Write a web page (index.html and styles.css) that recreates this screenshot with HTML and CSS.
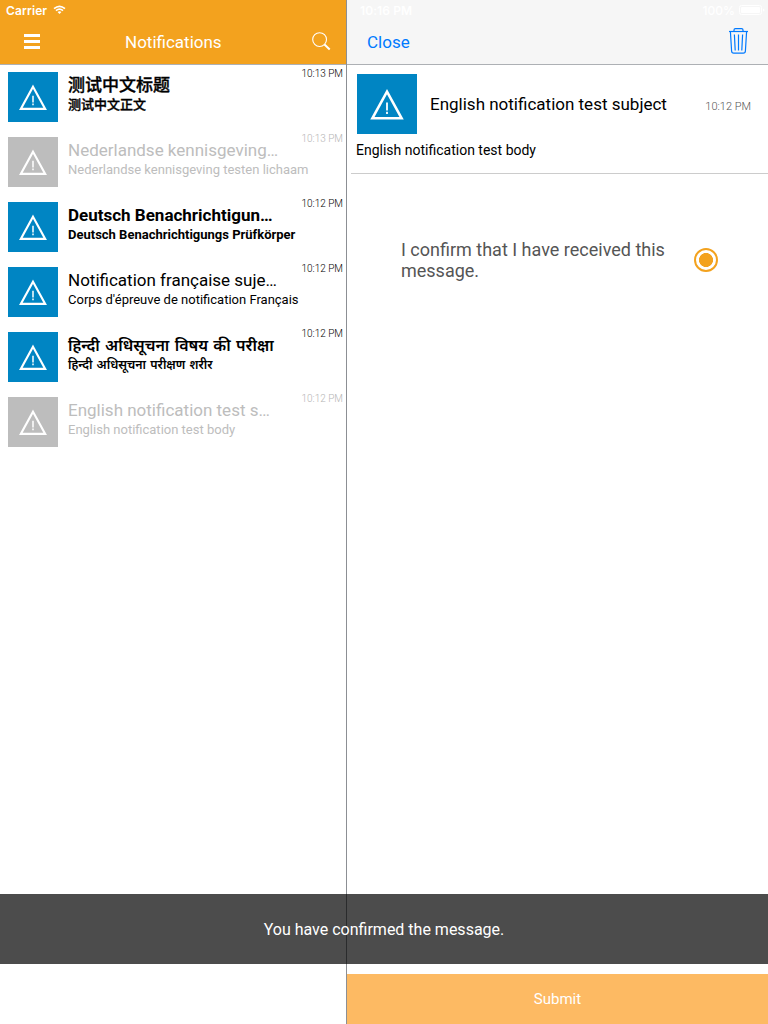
FILE: index.html
```html
<!DOCTYPE html>
<html lang="en">
<head>
<meta charset="utf-8">
<title>Notifications</title>
<link rel="stylesheet" href="styles.css">
</head>
<body>
<svg class="defs" width="0" height="0">
  <symbol id="warning" viewBox="0 0 50 50">
    <path d="M25 14.700 37.200 36.900H12.800Z" fill="none" stroke="#fff" stroke-width="2.100"/>
    <path d="M25 23.800v6.700M25 31.500v1.800" stroke="#fff" stroke-width="1.500"/>
  </symbol>
</svg>
<div class="app">
  <aside class="sidebar">
    <header class="bar bar-main">
      <div class="status">
        <span class="carrier">Carrier</span>
        <svg class="wifi" width="13" height="10" viewBox="0 0 14 10"><g fill="none" stroke="#fff" stroke-width="1.8"><path d="M1.1 3.500Q7-1.500 12.900 3.500"/><path d="M3.200 5.800Q7 2.500 10.800 5.800"/></g><path d="M4.900 7.200Q7 5.500 9.100 7.200L7 9.400Z" fill="#fff"/></svg>
      </div>
      <div class="nav">
        <svg class="menu" width="16" height="15" viewBox="0 0 16 15"><path d="M0 1.5h16M0 7.5h16M0 13.5h16" stroke="#fff" stroke-width="3"/></svg>
        <h1 class="heading">Notifications</h1>
        <svg class="search" width="19" height="19" viewBox="0 0 19 19" fill="none" stroke="#fff"><circle cx="7.600" cy="7.600" r="6.900" stroke-width="1.100"/><path d="m12.500 12.500 5.200 5" stroke-width="2"/></svg>
      </div>
    </header>
    <ul class="list">
      <li class="item unread"><svg class="tile"><use href="#warning"/></svg><div class="copy"><div class="title zh">测试中文标题</div><div class="sub zh">测试中文正文</div></div><time class="time">10:13 PM</time></li>
      <li class="item inactive"><svg class="tile"><use href="#warning"/></svg><div class="copy"><div class="title">Nederlandse kennisgeving…</div><div class="sub">Nederlandse kennisgeving testen lichaam</div></div><time class="time">10:13 PM</time></li>
      <li class="item unread"><svg class="tile"><use href="#warning"/></svg><div class="copy"><div class="title">Deutsch Benachrichtigun…</div><div class="sub">Deutsch Benachrichtigungs Prüfkörper</div></div><time class="time">10:12 PM</time></li>
      <li class="item"><svg class="tile"><use href="#warning"/></svg><div class="copy"><div class="title">Notification française suje…</div><div class="sub">Corps d'épreuve de notification Français</div></div><time class="time">10:12 PM</time></li>
      <li class="item unread"><svg class="tile"><use href="#warning"/></svg><div class="copy"><div class="title hi">हिन्दी अधिसूचना विषय की परीक्षा</div><div class="sub hi">हिन्दी अधिसूचना परीक्षण शरीर</div></div><time class="time">10:12 PM</time></li>
      <li class="item inactive"><svg class="tile"><use href="#warning"/></svg><div class="copy"><div class="title">English notification test s…</div><div class="sub">English notification test body</div></div><time class="time">10:12 PM</time></li>
    </ul>
  </aside>
  <main class="detail">
    <header class="bar bar-detail">
      <div class="status">
        <span class="clock">10:16 PM</span>
        <span class="percent">100%</span>
        <svg class="battery" width="26" height="10" viewBox="0 0 26 10"><rect x=".5" y=".5" width="22" height="9" rx="2" fill="none" stroke="#fff"/><rect x="2" y="2" width="19" height="6" rx="1" fill="#fff"/><path d="M24 3.5v3q1.5-.5 1.5-1.5T24 3.5" fill="#fff"/></svg>
      </div>
      <div class="nav">
        <a class="close">Close</a>
        <svg class="trash" width="19" height="26" viewBox="0 0 19 26" fill="none" stroke="#007aff" stroke-width="1.2"><path d="M0 3.500h19"/><path d="M5 3.500V2Q5 .6 6.400 .6h6.200Q14 .6 14 2v1.500"/><path d="M1.400 3.500 2.600 23Q2.700 25.200 4.700 25.200H14.300Q16.300 25.200 16.400 23L17.600 3.500"/><path d="M5.400 6.500 6.200 22.500M9.500 6.500v16M13.600 6.500 12.800 22.500"/></svg>
      </div>
    </header>
    <section class="message">
      <div class="summary">
        <svg class="tile large"><use href="#warning"/></svg>
        <h2 class="subject">English notification test subject</h2>
        <time class="sent">10:12 PM</time>
      </div>
      <p class="body">English notification test body</p>
    </section>
    <label class="confirm">
      <span class="confirm-text">I confirm that I have received this message.</span>
      <span class="radio"></span>
    </label>
    <button class="submit">Submit</button>
  </main>
  <div class="toast">You have confirmed the message.</div>
</div>
</body>
</html>
```
FILE: styles.css
```css
* { box-sizing: border-box; }
body { margin: 0; background: #fff; color: #000; font-family: Roboto, "Noto Sans", "Noto Sans CJK SC", sans-serif; font-feature-settings: "liga" 1; }
h1, h2, p, ul { margin: 0; padding: 0; font-weight: 400; }
svg { display: block; flex: none; }
.defs { position: absolute; }
.app { position: relative; display: flex; width: 768px; height: 1024px; overflow: hidden; }
.sidebar { width: 347px; border-right: 1px solid #8c8f94; }
.detail { width: 421px; display: flex; flex-direction: column; }
.bar { height: 65px; border-bottom: 1px solid #adb0b4; }
.bar-main { width: 346px; background: #f3a21e; color: #fff; }
.bar-detail { background: #f6f6f6; }
.status { height: 20px; display: flex; align-items: center; color: #fff; font: 600 12px/20px Inter, sans-serif; }
.bar-main .status { padding-left: 6px; gap: 6px; }
.carrier { padding-top: 2px; letter-spacing: .1px; }
.clock { padding: 2px 0 0 13px; letter-spacing: .1px; }
.percent { margin-left: auto; margin-right: 4px; padding-top: 2px; font-weight: 500; }
.battery { margin-right: 3px; }
.nav { height: 44px; display: flex; align-items: center; }
.menu { margin-left: 24px; margin-top: -2px; }
.heading { margin-left: 85px; font-size: 17px; line-height: 20px; }
.search { margin-left: auto; margin-right: 15px; margin-top: -2px; }
.close { margin-left: 20px; color: #007aff; font-size: 17px; }
.trash { margin-left: auto; margin-right: 20px; margin-top: -3px; }
.list { list-style: none; }
.item { height: 65px; display: flex; padding: 7px 3px 0 8px; position: relative; }
.tile { width: 50px; height: 50px; background: #0085c3; }
.large { width: 60px; height: 60px; }
.copy { margin-left: 10px; padding-top: 3px; white-space: nowrap; }
.title { height: 20px; font-size: 17px; line-height: 20px; }
.sub { height: 18px; margin-top: 1px; font-size: 13px; line-height: 18px; }
.unread .title, .unread .sub { font-weight: 700; }
.unread .zh { font-weight: 500; -webkit-text-stroke: .35px #000; }
.unread .title.zh { line-height: 21px; }
.unread .hi { font-family: "Noto Sans", sans-serif; font-weight: 600; }
.title.hi { font-size: 16px; word-spacing: 1.1px; }
.sub.hi { font-size: 12.3px; line-height: 17px; word-spacing: 1px; }
.time { position: absolute; right: 3px; top: 3px; font-size: 10px; font-weight: 300; line-height: 12px; color: #000; }
.inactive { color: #bdbdbd; }
.inactive .tile { background: #bdbdbd; }
.inactive .time { color: #b5b5b5; }
.message { height: 109px; margin-left: 4px; border-bottom: 1px solid #ccc; }
.summary { display: flex; align-items: center; padding: 9px 17px 0 6px; }
.subject { margin-left: 13px; font-size: 17px; line-height: 20px; }
.sent { margin-left: auto; font-size: 11px; font-weight: 300; line-height: 14px; color: #555; padding-top: 5px; }
.body { margin: 8px 0 0 5px; font-size: 14px; line-height: 17px; }
.confirm { display: flex; align-items: center; margin: 65px 50px 0 54px; color: #555; }
.confirm-text { width: 280px; font-size: 18px; line-height: 21px; }
.radio { width: 24px; height: 24px; margin-left: auto; border: 2px solid #f3a21e; border-radius: 50%; background: radial-gradient(circle, #f3a21e 6.7px, #fff 7.3px); }
.submit { margin-top: auto; height: 50px; border: 0; background: #fdba63; color: #fff; font: 15px Roboto, sans-serif; }
.toast { position: absolute; left: 0; top: 894px; width: 768px; height: 70px; background: rgba(0,0,0,.7); color: #fff; font-size: 16px; line-height: 71px; text-align: center; }
```
